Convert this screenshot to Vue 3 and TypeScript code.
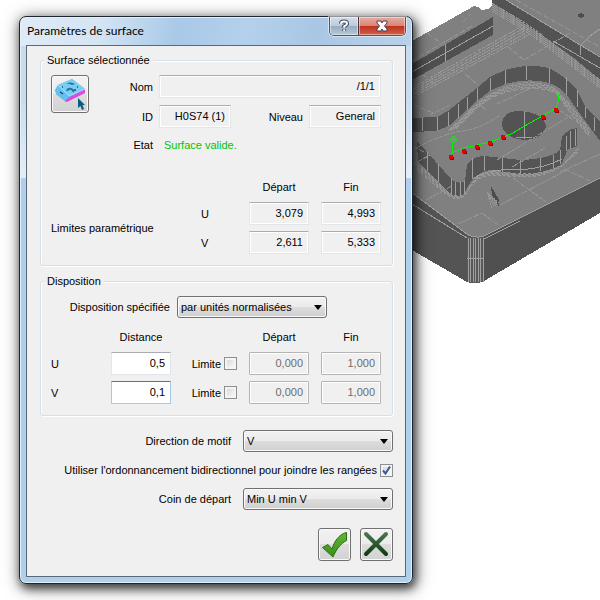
<script setup lang="ts">
import { ref } from 'vue'

interface Limit {
  axis: string
  start: string
  end: string
}

interface Spacing {
  axis: string
  distance: string
  limited: boolean
  start: string
  end: string
}

const limits: Limit[] = [
  { axis: 'U', start: '3,079', end: '4,993' },
  { axis: 'V', start: '2,611', end: '5,333' },
]

const spacings = ref<Spacing[]>([
  { axis: 'U', distance: '0,5', limited: false, start: '0,000', end: '1,000' },
  { axis: 'V', distance: '0,1', limited: false, start: '0,000', end: '1,000' },
])

const layoutMode = ref('par unités normalisées')
const direction = ref('V')
const corner = ref('Min U min V')
const bidirectional = ref(true)

const wallLines: number[][] = [
  [422, 118, 131], [437, 117, 131], [448, 112, 126], [458, 104, 118], [467, 97, 110],
  [477, 88, 101], [490, 78, 91], [505, 70, 84], [526, 66, 80], [549, 68, 83],
  [566, 77, 95], [577, 90, 107], [585, 107, 118], [594, 117, 131],
]
const frontLines: number[][] = [
  [427, 152, 171], [438, 164, 182], [451, 178, 193], [455, 182, 196], [460, 182, 197],
  [464, 181, 194], [472, 158, 179], [484, 156, 171], [502, 158, 172], [520, 160, 174],
  [540, 158, 171], [553, 155, 169], [560, 150, 164], [566, 136, 151], [570, 131, 149], [575, 129, 146],
]
const pillarLines = [468, 470, 473, 475, 478, 480, 483]
const ribs = [0, 2, 4, 6, 8]
const points: number[][] = [
  [451, 157], [464, 151], [477, 147], [490, 143], [503, 137], [543, 117], [556, 110],
]
</script>

<template>
  <main class="desktop">
    <section class="dialog" role="dialog" aria-labelledby="title">
      <header class="titlebar">
        <h1 id="title">Paramètres de surface</h1>
        <div class="window-buttons">
          <button type="button" class="help" aria-label="Aide">
            <svg width="12" height="14" viewBox="0 0 12 14">
              <path d="M3 4.5Q3 2.5 6 2.5T9 4.8Q9 6 6.2 7.3V8.8M6.2 10.2V12" fill="none" stroke="#3f4a5c" stroke-width="4" />
              <path d="M3 4.8Q3 2.5 6 2.5T9 4.8Q9 6 6.2 7.3V8.8M6.2 10.4V12" fill="none" stroke="#fff" stroke-width="2" />
            </svg>
          </button>
          <button type="button" class="close" aria-label="Fermer">
            <svg width="14" height="12" viewBox="0 0 14 12">
              <path d="M2 1H6L7 3 8 1H12V3L9.5 6 12 9V11H8L7 9 6 11H2V9L4.5 6 2 3Z" fill="#fff" stroke="#50404c" />
            </svg>
          </button>
        </div>
      </header>

      <form class="client" @submit.prevent>
        <fieldset>
          <legend>Surface sélectionnée</legend>
          <div class="identity">
            <button type="button" class="pick" aria-label="Sélectionner la surface">
              <svg width="36" height="36" viewBox="0 0 36 36">
                <path d="M3 14 6 9 20 3 33 13V17L14 26 4 18Z" fill="#5bb5e6" />
                <path d="M6 9 20 3 33 13 17 20Z" fill="#7ccdf2" />
                <path d="M4 13 6 9 17 20 13 25 4 18Z" fill="#64c0ee" />
                <path d="M13 25 18 21 33 13V17L15 26Z" fill="#e348dc" />
                <path d="M6 9 17 20 33 13" fill="none" stroke="#a8e0f8" />
                <path d="M14 8Q18 5 23 8L20 9Q17 7 14 8Z" fill="#246b9f" />
                <path d="M15 15Q16 12 19 13T21 16" fill="none" stroke="#2475a8" stroke-width="2" />
                <path d="M8 16 11 18M10 11H11M25 11H26M22 14H24" stroke="#174b7a" stroke-width="1.5" />
                <path d="M26 22V32L28.5 30 30 34 32 33 30.5 29H33Z" fill="#075c84" />
              </svg>
            </button>
            <label class="cap" for="nom">Nom</label>
            <input id="nom" class="field wide" value="/1/1" readonly />
            <label class="cap" for="ident">ID</label>
            <input id="ident" class="field" value="H0S74 (1)" readonly />
            <label class="cap" for="niveau">Niveau</label>
            <input id="niveau" class="field" value="General" readonly />
            <span class="cap state-cap">Etat</span>
            <output class="state">Surface valide.</output>
          </div>

          <div class="limits">
            <span class="limits-cap">Limites paramétrique</span>
            <span class="col-start head">Départ</span>
            <span class="head">Fin</span>
            <template v-for="row in limits" :key="row.axis">
              <span class="axis">{{ row.axis }}</span>
              <input class="field" :value="row.start" :aria-label="`Départ ${row.axis}`" readonly />
              <input class="field" :value="row.end" :aria-label="`Fin ${row.axis}`" readonly />
            </template>
          </div>
        </fieldset>

        <fieldset>
          <legend>Disposition</legend>
          <div class="mode">
            <label for="mode">Disposition spécifiée</label>
            <span class="combo">
              <select id="mode" v-model="layoutMode">
                <option>par unités normalisées</option>
              </select>
              <svg width="8" height="5" viewBox="0 0 8 5"><path d="M0 0H8L4 5Z" /></svg>
            </span>
          </div>
          <div class="spacing">
            <span class="col-distance head">Distance</span>
            <span class="col-from head">Départ</span>
            <span class="head">Fin</span>
            <template v-for="row in spacings" :key="row.axis">
              <label :for="`distance-${row.axis}`">{{ row.axis }}</label>
              <input :id="`distance-${row.axis}`" v-model="row.distance" class="field edit" :class="{ focused: row.axis === 'V' }" />
              <label class="limit">
                Limite
                <span class="tick"><input v-model="row.limited" type="checkbox" /></span>
              </label>
              <input class="field off" :value="row.start" :disabled="!row.limited" :aria-label="`Départ ${row.axis}`" />
              <input class="field off" :value="row.end" :disabled="!row.limited" :aria-label="`Fin ${row.axis}`" />
            </template>
          </div>
        </fieldset>

        <div class="options">
          <div class="option">
            <label for="direction">Direction de motif</label>
            <span class="combo">
              <select id="direction" v-model="direction">
                <option>U</option>
                <option>V</option>
              </select>
              <svg width="8" height="5" viewBox="0 0 8 5"><path d="M0 0H8L4 5Z" /></svg>
            </span>
          </div>
          <label class="option limit">
            Utiliser l'ordonnancement bidirectionnel pour joindre les rangées
            <span class="tick">
              <input v-model="bidirectional" type="checkbox" />
              <svg v-if="bidirectional" width="9" height="9" viewBox="0 0 9 9">
                <path d="M1 4.5 3.5 7.5 8 0.5" fill="none" stroke="#3f5896" stroke-width="2" />
              </svg>
            </span>
          </label>
          <div class="option">
            <label for="corner">Coin de départ</label>
            <span class="combo">
              <select id="corner" v-model="corner">
                <option>Min U min V</option>
              </select>
              <svg width="8" height="5" viewBox="0 0 8 5"><path d="M0 0H8L4 5Z" /></svg>
            </span>
          </div>
        </div>

        <div class="actions">
          <button type="submit" aria-label="Valider">
            <svg width="31" height="31" viewBox="0 0 31 31">
              <defs>
                <linearGradient id="green" x1="0" y1="0" x2="0" y2="1">
                  <stop offset="0" stop-color="#66b53a" />
                  <stop offset="1" stop-color="#379011" />
                </linearGradient>
              </defs>
              <path d="M3.5 18.5 9 15.5 13 20C15 13 20 5 27.5 3.5V11.5C21 15 17 21 14 28Z" fill="url(#green)" stroke="#2c6f12" />
            </svg>
          </button>
          <button type="button" aria-label="Annuler">
            <svg width="31" height="31" viewBox="0 0 31 31">
              <defs>
                <linearGradient id="cross" x1="0" y1="0" x2="0" y2="1">
                  <stop offset="0" stop-color="#4a7450" />
                  <stop offset="1" stop-color="#0f3d14" />
                </linearGradient>
              </defs>
              <path d="M5 5 25 25M25 5 5 25" fill="none" stroke="url(#cross)" stroke-width="4" stroke-linecap="round" />
            </svg>
          </button>
        </div>
      </form>
    </section>

    <svg class="part" viewBox="413 0 187 300" preserveAspectRatio="xMinYMin slice" shape-rendering="crispEdges" role="img" aria-label="Pièce">
      <path d="M412 41 474 6 478 7 482 10 488 9 492 5V0H600V213L483 281Q475 285 467 282L412 250Z" fill="#808080" />
      <path d="M412 64 493 17V35L412 80Z" fill="#505050" />
      <path d="M492 0H506L600 57V80L574 58 530 27 492 3Z" fill="#535353" />
      <path d="M412 193 467 234V282L412 250Z" fill="#545454" />
      <path d="M484 236 600 178V213L484 281Z" fill="#505050" />
      <path d="M467 235Q475 239 484 236V281Q475 285 467 282Z" fill="#585858" />
      <path
        d="M412 118 437 117 448 111 477 88 490 77 505 70Q527 63 549 68 565 76 577 90L586 108 600 122V141L583 118 571 101Q561 85 545 82 527 78 505 84L490 91 477 101 450 125 437 131 412 132Z"
        fill="#555"
      />
      <path d="M502 125Q502 111 520 111 545 113 546 127 542 139 524 140 504 138 502 125Z" fill="#535353" />
      <path
        d="M417 141 453 181Q460 184 465 181L467 165Q472 156 485 156L520 160Q550 159 560 150L562 137Q568 129 577 128V146L568 149 561 165Q540 175 520 174L490 170Q474 173 466 190 461 200 451 195L418 162Z"
        fill="#555"
      />
      <path d="M491 186 499 200V207L492 195Z" fill="#4c4c4c" />

      <g fill="none" stroke="#a0a0a0">
        <path v-for="l in wallLines" :key="`w${l[0]}`" :d="`M${l[0]} ${l[1]}V${l[2]}`" />
        <path v-for="l in frontLines" :key="`f${l[0]}`" :d="`M${l[0]} ${l[1]}V${l[2]}`" />
        <path v-for="x in pillarLines" :key="x" :d="`M${x} 238V282`" />
        <path d="M412 72 493 26M445 44V62M412 204 467 238M484 239 520 221M412 193 467 234Q475 239 484 236L600 178M467 258H484" />
        <path d="M524 111V139M516 137H532M506 0 600 57M553 41 600 68M580 55V46Q590 35 600 29M473 179Q486 168 520 170 545 168 562 159" />
      </g>
      <g fill="none" stroke="#979797">
        <path v-for="r in ribs" :key="`a${r}`" :d="`M412 ${88 + r * 1.2}L${524 + r} ${25 + r}`" stroke-dasharray="4 1" />
        <path v-for="r in ribs" :key="`b${r}`" :d="`M492 ${3 + r}L530 ${26 + r} 600 ${80 + r}`" stroke-dasharray="3 1" />
        <path v-for="r in ribs" :key="`c${r}`" :d="`M${448 + r} ${131 - r / 3}L478 ${103 + r / 2} 491 ${94 + r / 2}Q527 ${74 + r} 556 ${89 + r / 2}L572 ${107 + r} 590 ${130 + r}`" stroke-dasharray="5 2" />
        <path v-for="r in ribs" :key="`d${r}`" :d="`M417 ${162 + r}L447 ${191 + r / 2}Q462 ${202 + r / 3} 468 190 477 ${173 + r / 2} 490 ${171 + r / 2}L520 ${174 + r / 3}Q545 ${174 + r / 2} 563 165L579 ${147 + r / 2}`" stroke-dasharray="3 2" />
        <path v-for="r in ribs" :key="`e${r}`" :d="`M${487 + r / 2} ${192 + r / 2}L${492 + r} ${208 - r / 2}`" stroke-dasharray="2 1" />
      </g>
      <g fill="none" stroke="#949494">
        <path d="M427 33 438 41M463 22 471 14M412 61 472 26M516 0 600 47M507 46 524 60M524 60 570 33M465 74 478 85M412 105 434 113M434 83 423 75" stroke-dasharray="6 2" />
        <path d="M412 151Q428 140 455 132 480 130 500 115M430 115 450 105M478 103 487 111M560 110 573 120M497 104 535 86M412 165 430 155M497 160 530 140 575 113" stroke-dasharray="5 1" />
        <path d="M426 200 452 186M458 224 482 213 498 225M500 205 567 170 590 181M513 178 546 202M560 172 600 154M512 167 545 148M412 146 424 152" stroke-dasharray="7 1" />
      </g>
      <path d="M578 14H584V17H578ZM580 13H582V18H580Z" fill="#4d4d4d" />
      <g fill="none" stroke="#00f400">
        <path d="M559 94 558 102 556 108 511 134 503 137 490 142 464 148 452 153 453 143" />
        <circle cx="453.5" cy="139.5" r="3" shape-rendering="auto" />
        <path d="M450 139.5H457M453.5 136V143" />
      </g>
      <g v-for="p in points" :key="p[0]">
        <rect :x="p[0] - 2" :y="p[1] - 2" width="4" height="4" fill="#e80000" />
        <path :d="`M${p[0] - 1} ${p[1] + 2}H${p[0] + 2}V${p[1]}`" fill="none" stroke="#900" />
      </g>
    </svg>
  </main>
</template>

<style>
body {
  margin: 0;
  background: #fff;
}
</style>

<style scoped>
* {
  box-sizing: border-box;
}

.desktop {
  display: grid;
  grid-template-columns: minmax(0, 1fr) 187px;
  align-items: start;
  padding-left: 19px;
  min-height: 100vh;
  overflow: hidden;
  font: 11px/16px Tahoma, "Liberation Sans", sans-serif;
  color: #000;
}

.part {
  display: block;
  width: 100%;
  height: 300px;
}

.dialog {
  position: relative;
  z-index: 1;
  margin-top: 16px;
  padding: 0 6px 6px;
  border: 1px solid #1d262f;
  border-radius: 7px;
  background:
    linear-gradient(100deg, #dfebf6 0, #d5e5f4 20%, #a9c9e8 40%, #b4d0ec 58%, #a9c7e4 75%, #b9d1ea 100%) 0 0 / 100% 29px no-repeat,
    linear-gradient(#c9dcee 0, #c9dcee 80px, #e4eef8 161px, #b0cfec 161px, #b0cfec 100%);
  box-shadow:
    inset 0 0 0 1px #e3f0fa,
    2px 4px 9px 0 rgba(0, 0, 0, 0.6),
    2px 3px 16px 2px rgba(0, 0, 0, 0.5);
}

.titlebar {
  display: flex;
  justify-content: space-between;
  align-items: flex-start;
  height: 28px;
}

h1 {
  margin: 5px 0 0;
  padding-left: 1px;
  font: 12px/18px "Segoe UI", Lato, "Open Sans", sans-serif;
}

.window-buttons {
  display: flex;
  border: 1px solid #4b5667;
  border-top: 0;
  border-radius: 0 0 5px 5px;
  box-shadow: 0 0 0 1px rgba(255, 255, 255, 0.5);
  overflow: hidden;
}

.window-buttons button {
  display: grid;
  place-items: center;
  width: 28px;
  height: 18px;
  padding: 0;
  border: 0;
  background: linear-gradient(#d4dfe9 0, #bccbd9 50%, #98abc0 50%, #b4c9da 100%);
  box-shadow: inset 0 0 0 1px rgba(255, 255, 255, 0.45);
}

.window-buttons .close {
  width: 47px;
  border-left: 1px solid #4b3440;
  background: linear-gradient(#e8aba0 0, #d98475 50%, #bc3120 50%, #d2614a 100%);
}

.client {
  padding: 6px 12px 15px 13px;
  border: 1px solid #5b6876;
  background: #f0f0f0;
}

fieldset {
  min-width: 0;
  margin: 0 0 7px;
  padding: 7px 11px 11px 10px;
  border: 1px solid #d5dfe5;
  border-radius: 3px;
  box-shadow: inset 1px 1px #fff, 1px 1px #fff;
}

legend {
  margin-left: -7px;
  padding: 0 3px;
  background: #f0f0f0;
}

.identity {
  display: grid;
  grid-template-columns: 38px 58px 72px minmax(0, 1fr) 72px;
  grid-template-rows: 23px 23px 20px;
  gap: 7px 6px;
  align-items: center;
}

.pick {
  grid-row: 1 / 3;
  align-self: start;
  width: 38px;
  height: 38px;
}

.cap {
  text-align: right;
}

.wide {
  grid-column: 3 / 6;
}

.state-cap {
  grid-column: 2;
}

.state {
  grid-column: 3 / 6;
  padding-left: 5px;
  color: #00c400;
}

.limits {
  display: grid;
  grid-template-columns: minmax(0, 1fr) 36px 60px 60px;
  grid-template-rows: 19px 23px 23px;
  gap: 6px 12px;
  align-items: center;
  margin-top: 22px;
}

.limits-cap {
  grid-row: 2 / 4;
  grid-column: 1;
}

.col-start {
  grid-column: 3;
}

.axis {
  grid-column: 2;
}

.head {
  text-align: center;
}

.field {
  width: 100%;
  min-width: 0;
  height: 23px;
  padding: 0 5px 2px;
  border: 1px solid #e2e5ea;
  border-top-color: #ababb2;
  border-radius: 1px;
  outline: 0;
  background: #f0f0f0;
  box-shadow: inset 0 0 0 1px #fff;
  font: inherit;
  color: #000;
  text-align: right;
}

.edit {
  background: #fff;
}

.focused {
  border-color: #a3cbe9;
  border-top-color: #3d7bad;
}

.off {
  border-color: #b4b4b4;
  color: #6d6d6d;
}

.mode {
  display: flex;
  justify-content: flex-end;
  align-items: center;
  gap: 7px;
  padding-right: 54px;
}

.combo {
  display: grid;
  align-items: center;
  width: 150px;
}

.combo select,
.combo svg {
  grid-area: 1 / 1;
}

.combo svg {
  justify-self: end;
  margin-right: 5px;
  pointer-events: none;
}

select {
  appearance: none;
  width: 100%;
  height: 22px;
  margin: 0;
  padding: 0 16px 0 3px;
  border: 1px solid #707070;
  border-radius: 3px;
  background: linear-gradient(#f2f2f2 0, #ebebeb 50%, #dddddd 50%, #cfcfcf 100%);
  box-shadow: inset 0 0 0 1px #fafafa;
  font: inherit;
  color: #000;
}

.spacing {
  display: grid;
  grid-template-columns: 48px 60px minmax(0, 1fr) 60px 60px;
  grid-template-rows: 18px 23px 23px;
  gap: 6px 12px;
  align-items: center;
  margin-top: 10px;
}

.col-distance {
  grid-column: 2;
}

.col-from {
  grid-column: 4;
}

.limit {
  display: flex;
  justify-content: flex-end;
  align-items: center;
  gap: 3px;
}

.tick {
  display: grid;
  place-items: center;
}

.tick > * {
  grid-area: 1 / 1;
}

.tick svg {
  pointer-events: none;
}

.tick input {
  appearance: none;
  width: 13px;
  height: 13px;
  margin: 0;
  border: 1px solid #8e8f8f;
  background: linear-gradient(135deg, #cfd3d9, #f6f6f6 80%);
  box-shadow: inset 0 0 0 2px #f4f4f4;
}

.options {
  display: grid;
  gap: 7px;
  margin-top: 14px;
}

.option {
  display: flex;
  justify-content: flex-end;
  align-items: center;
  gap: 12px;
  min-height: 22px;
}

.option.limit {
  gap: 3px;
}

.actions {
  display: flex;
  justify-content: flex-end;
  gap: 9px;
  margin-top: 18px;
}

.pick,
.actions button {
  display: grid;
  place-items: center;
  padding: 0;
  border: 1px solid #707070;
  border-radius: 3px;
  background: linear-gradient(#f2f2f2 0, #ebebeb 50%, #dddddd 50%, #d2d2d2 100%);
  box-shadow: inset 0 0 0 1px #fafafa;
}

.actions button {
  width: 33px;
  height: 33px;
}
</style>
